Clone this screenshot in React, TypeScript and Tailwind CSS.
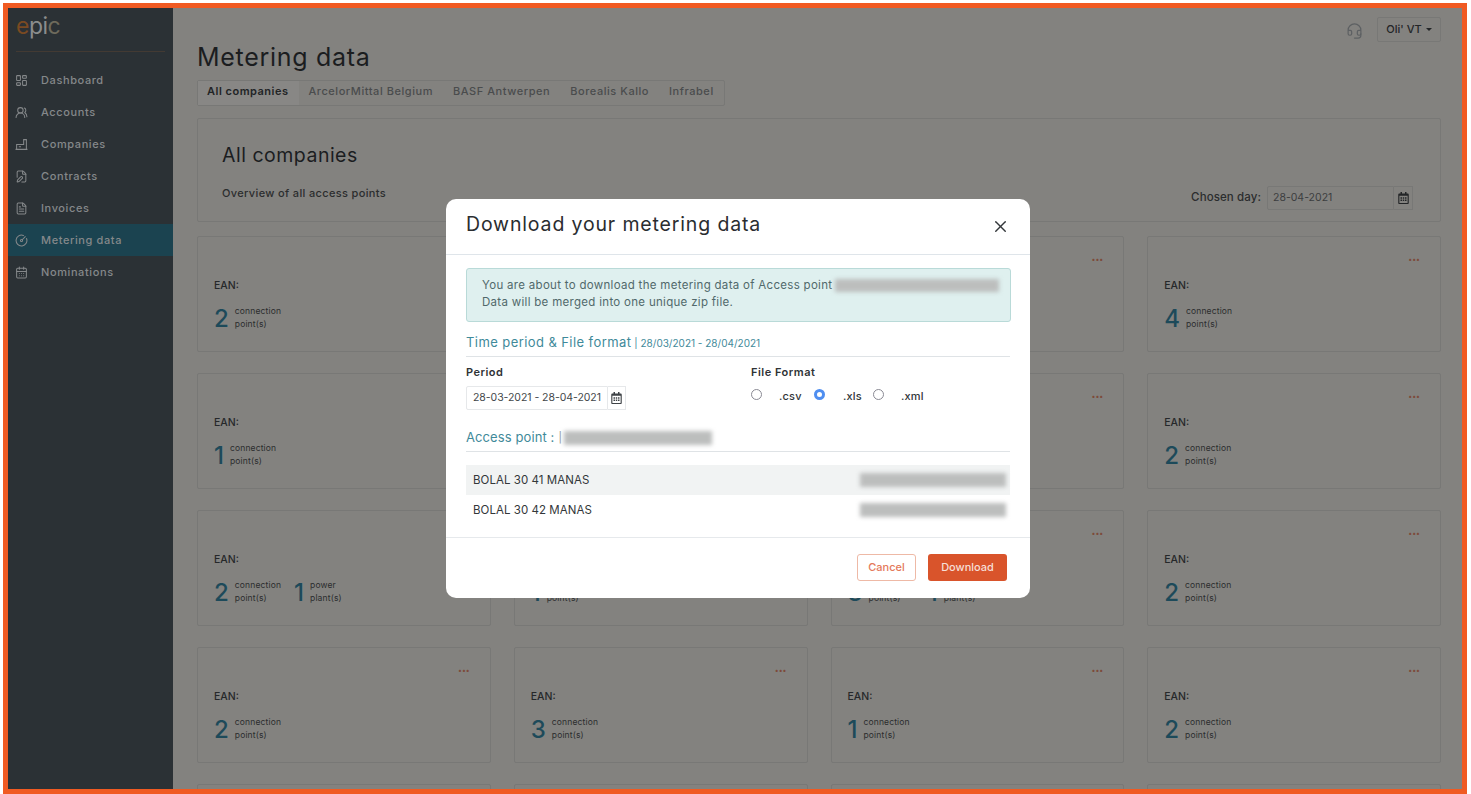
import { FC, ReactNode } from 'react';
import {
  CalendarDays,
  CircleGauge,
  FilePen,
  FileText,
  Headset,
  LayoutDashboard,
  UsersRound,
  X,
} from 'lucide-react';
import { FaRegCalendarAlt } from 'react-icons/fa';

// lucide's factory reads wrong at this size: box on a base line with one chimney
const CompanyIcon: FC<{ className?: string; strokeWidth?: number }> = ({ className, strokeWidth }) => (
  <svg viewBox="0 0 24 24" fill="none" stroke="currentColor" strokeWidth={strokeWidth} className={className}>
    <path d="M1 21h22M3 21v-9h13V3h5v18M7 16h4" />
  </svg>
);

const navItems = [
  { label: 'Dashboard', icon: LayoutDashboard },
  { label: 'Accounts', icon: UsersRound },
  { label: 'Companies', icon: CompanyIcon },
  { label: 'Contracts', icon: FilePen },
  { label: 'Invoices', icon: FileText },
  { label: 'Metering data', icon: CircleGauge, active: true },
  { label: 'Nominations', icon: CalendarDays },
];

const tabs = [
  'All companies',
  'ArcelorMittal Belgium',
  'BASF Antwerpen',
  'Borealis Kallo',
  'Infrabel',
];

// [connection points, power plants] per card, left to right, top to bottom
const cards: [number, number][] = [
  [2, 0],
  [1, 0],
  [3, 0],
  [4, 0],
  [1, 0],
  [2, 0],
  [1, 0],
  [2, 0],
  [2, 1],
  [1, 0],
  [3, 1],
  [2, 0],
  [2, 0],
  [3, 0],
  [1, 0],
  [2, 0],
];

const Stat: FC<{ n: number; top: string; bottom: string }> = ({ n, top, bottom }) => (
  <div className="flex items-center gap-[6px]">
    <span className="text-[24px] leading-[26px] font-medium text-[#1d4a5a] mt-[3px]">{n}</span>
    <span className="text-[8.5px] leading-[13px] text-[#2b2d2e] tracking-[0.15px]">
      {top}
      <br />
      {bottom}
    </span>
  </div>
);

const Card: FC<{ points?: number; plants?: number }> = ({ points, plants }) => (
  <div className="h-[116px] bg-[#83827f] border border-[#787876] rounded-[2px] pl-[16px] pr-[20px] pt-[15px] shrink-0">
    {points !== undefined && (
      <>
        <div className="text-right text-[#7d4a3a] text-[7px] leading-[16px]">•••</div>
        <div className="mt-[11px] text-[10.5px] leading-[14px] font-medium text-[#26282a]">EAN:</div>
        <div className="mt-[10px] flex items-center gap-[13px]">
          <Stat n={points} top="connection" bottom="point(s)" />
          {!!plants && <Stat n={plants} top="power" bottom="plant(s)" />}
        </div>
      </>
    )}
  </div>
);

const Blur: FC<{ className: string }> = ({ className }) => (
  <div className={`bg-[#bcbebd] blur-[2px] ${className}`}></div>
);

const Radio: FC<{ label: string; checked?: boolean; labelClass: string }> = ({
  label,
  checked,
  labelClass,
}) => (
  <div className="flex items-center">
    <span
      className={
        checked
          ? 'w-[11px] h-[11px] rounded-full border-[3px] border-[#4f8ef0] bg-white -mt-[3px]'
          : 'w-[11px] h-[11px] rounded-full border border-[#8a8a94] bg-white -mt-[3px]'
      }
    ></span>
    <span className={`text-[11px] font-medium text-[#33373a] tracking-[0.2px] ${labelClass}`}>{label}</span>
  </div>
);

const SectionTitle: FC<{ children: ReactNode }> = ({ children }) => (
  <div className="flex items-center h-[28px] border-b border-[#dfe3e6] text-[#3f8a9a]">
    {children}
  </div>
);

const Modal = () => (
  <div className="absolute left-[438px] top-[191px] w-[584px] h-[399px] bg-white rounded-[10px] flex flex-col text-[#33373a]">
    <div className="h-[56px] border-b border-[#dfe5ea] flex items-center justify-between pl-[20px] pr-[20px]">
      <h2 className="text-[19.5px] font-normal text-[#2a2d30] tracking-[0.85px] -mt-[3px]">
        Download your metering data
      </h2>
      <X className="w-[19px] h-[19px] text-[#33373a]" strokeWidth={1.8} />
    </div>
    <div className="px-[20px] pt-[13px] flex-1">
      <div className="h-[54px] w-[545px] bg-[#dff0ef] border border-[#b9dad8] rounded-[3px] pl-[15px] pt-[8px] text-[11.5px] leading-[17px] text-[#51696b] tracking-[0.3px]">
        <div className="flex items-center">
          You are about to download the metering data of Access point
          <Blur className="ml-[3px] w-[164px] h-[13px]" />
        </div>
        <div>Data will be merged into one unique zip file.</div>
      </div>
      <div className="mt-[7px]">
        <SectionTitle>
          <span className="text-[13px] tracking-[0.42px]">Time period &amp; File format</span>
          <span className="text-[10px] ml-[3px] mt-[1px]">| 28/03/2021 - 28/04/2021</span>
        </SectionTitle>
      </div>
      <div className="flex mt-[7px] h-[56px]">
        <div className="w-[285px]">
          <div className="text-[11px] leading-[16px] font-semibold text-[#2f3336] tracking-[0.5px]">Period</div>
          <div className="mt-[6px] flex h-[24px] w-[160px]">
            <div className="w-[142px] border border-[#e6e8ea] rounded-l-[2px] flex items-center pl-[6px] text-[10.5px] text-[#43474a] tracking-[-0.05px]">
              28-03-2021 - 28-04-2021
            </div>
            <div className="w-[18px] border border-l-0 border-[#e6e8ea] flex items-center justify-center">
              <FaRegCalendarAlt className="w-[11px] h-[12px] text-[#3e4246]" />
            </div>
          </div>
        </div>
        <div>
          <div className="text-[11px] leading-[16px] font-semibold text-[#2f3336] tracking-[0.5px]">File Format</div>
          <div className="mt-[8px] flex">
            <Radio label=".csv" labelClass="ml-[17px] w-[35px]" />
            <Radio label=".xls" checked labelClass="ml-[18px] w-[30px]" />
            <Radio label=".xml" labelClass="ml-[17px]" />
          </div>
        </div>
      </div>
      <div className="mt-[4px]">
        <SectionTitle>
          <span className="text-[13px] tracking-[0.1px]">Access point :</span>
          <span className="text-[10.5px] ml-[4px] text-[#8a9599]">|</span>
          <Blur className="ml-[2px] w-[148px] h-[14px]" />
        </SectionTitle>
      </div>
      <div className="mt-[13px] text-[11.5px] text-[#33373a] tracking-[0.05px]">
        <div className="h-[30px] bg-[#f1f3f3] flex items-center justify-between pl-[7px] pr-[4px]">
          <span className="mt-[1px]">BOLAL 30 41 MANAS</span>
          <Blur className="w-[146px] h-[14px]" />
        </div>
        <div className="h-[30px] flex items-center justify-between pl-[7px] pr-[4px]">
          <span className="mt-[1px]">BOLAL 30 42 MANAS</span>
          <Blur className="w-[146px] h-[14px]" />
        </div>
      </div>
    </div>
    <div className="h-[61px] border-t border-[#e6e9ec] flex items-start justify-end gap-[12px] pt-[16px] pr-[23px]">
      <button className="w-[59px] h-[27px] border border-[#eeb9a6] rounded-[3px] text-[11px] font-medium text-[#e4795a] bg-white">
        Cancel
      </button>
      <button className="w-[79px] h-[27px] rounded-[3px] text-[11px] font-medium text-[#f6dfd6] bg-[#d9542b]">
        Download
      </button>
    </div>
  </div>
);

export default function App() {
  return (
    <div className="h-[794px] bg-white pt-[3px] pl-[3px] pr-[4px] overflow-hidden font-['Inter',sans-serif]">
      <div className="relative h-[791px] border-[5px] border-[#f05a22] flex overflow-hidden">
        <aside className="w-[165px] shrink-0 bg-[#2b3135] text-[#85888a]">
          <div className="h-[44px] mx-[8px] border-b border-[#433a33] flex items-start pt-[5px]">
            <span className="text-[23px] leading-[26px] tracking-[-0.5px] text-[#8b8d8d]">
              <span className="text-[#7a4a22]">e</span>pi<span className="text-[#6e6a5c]">c</span>
            </span>
          </div>
          <nav className="mt-[12px]">
            {navItems.map(({ label, icon: Icon, active }) => (
              <div
                key={label}
                className={
                  active
                    ? 'h-[32px] flex items-center pl-[7px] bg-[#1b4350]'
                    : 'h-[32px] flex items-center pl-[7px]'
                }
              >
                <Icon className="w-[13px] h-[13px] text-[#85888a]" strokeWidth={1.9} />
                <span className="ml-[13px] text-[11px] font-medium tracking-[0.6px]">{label}</span>
              </div>
            ))}
          </nav>
        </aside>
        <main className="flex-1 min-w-0 bg-[#83827f] pl-[24px] pr-[21px] text-[#232527]">
          <div className="h-[33px] flex justify-end items-start gap-[14px] pt-[9px]">
            <Headset className="w-[17px] h-[18px] mt-[5px] text-[#5d6063]" strokeWidth={1.7} />
            <div className="w-[64px] h-[25px] shrink-0 border border-[#787876] rounded-[2px] flex items-center justify-center text-[11px] font-medium">
              Oli' VT
              <span className="ml-[4px] border-x-[3px] border-x-transparent border-t-[3px] border-t-[#232527]"></span>
            </div>
          </div>
          <h1 className="text-[25px] leading-[32px] font-normal tracking-[0.7px] text-[#1b1d1f]">
            Metering data
          </h1>
          <div className="mt-[7px] flex w-fit h-[26px] border border-[#787876] rounded-[2px] text-[11px] font-medium">
            {tabs.map((t, i) => (
              <div
                key={t}
                className={
                  i === 0
                    ? 'pl-[9px] pr-[10px] pb-[3px] flex items-center font-semibold text-[#222426] bg-[#888785] tracking-[0.5px]'
                    : 'px-[10px] pb-[3px] flex items-center text-[#4a4c4d] tracking-[0.55px]'
                }
              >
                {t}
              </div>
            ))}
          </div>
          <section className="mt-[12px] h-[104px] border border-[#787876] rounded-[2px] pl-[24px] pr-[27px] flex justify-between">
            <div>
              <div className="mt-[24px] text-[19.5px] leading-[24px] font-normal tracking-[0.5px] text-[#1b1d1f]">
                All companies
              </div>
              <div className="mt-[18px] text-[11px] font-medium text-[#2b2d2e] tracking-[0.35px]">
                Overview of all access points
              </div>
            </div>
            <div className="self-end mb-[11px] flex items-center">
              <span className="text-[11.5px] font-medium text-[#2b2d2e] tracking-[0.1px]">Chosen day:</span>
              <div className="ml-[6px] flex h-[24px]">
                <div className="w-[127px] border border-[#787876] rounded-l-[2px] flex items-center pl-[5px] text-[10.5px] text-[#3c3e40]">
                  28-04-2021
                </div>
                <div className="w-[19px] border border-l-0 border-[#787876] flex items-center justify-center">
                  <FaRegCalendarAlt className="w-[11px] h-[12px] text-[#232527]" />
                </div>
              </div>
            </div>
          </section>
          <div className="mt-[14px] grid grid-cols-4 gap-x-[23px] gap-y-[21px]">
            {cards.map(([points, plants], i) => (
              <Card key={i} points={points} plants={plants} />
            ))}
            {/* last row only peeks in at the bottom edge */}
            <Card />
            <Card />
            <Card />
            <Card />
          </div>
        </main>
        <Modal />
      </div>
    </div>
  );
}
